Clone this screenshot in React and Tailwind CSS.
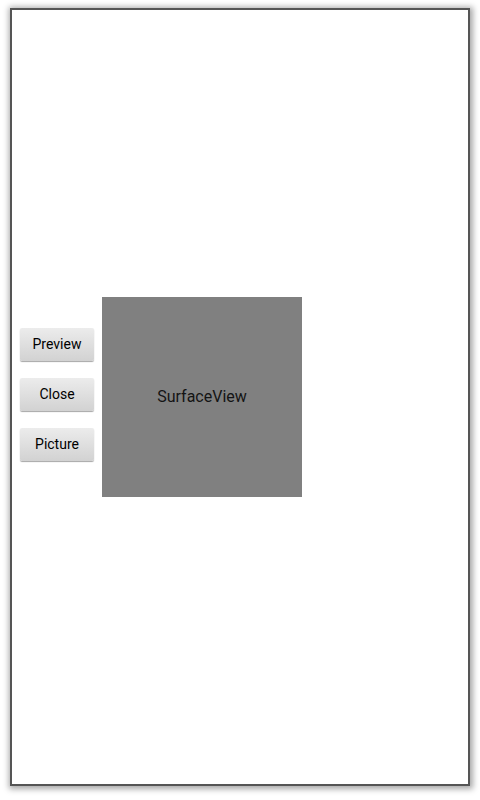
const buttons = ["Preview", "Close", "Picture"];

export default function App() {
  return (
    <div className="w-[480px] h-[800px] bg-white pt-[8px] pl-[10px] font-['Roboto',sans-serif]">
      <div className="w-[460px] h-[778px] border-2 border-[#555555] bg-white shadow-[1px_1px_6px_2px_rgba(0,0,0,0.35)] flex items-center pl-[8px]">
        <div className="flex flex-col gap-[17px] w-[74px] mr-[8px] -mt-[6px]">
          {buttons.map((label) => (
            <button
              key={label}
              className="h-[33px] w-[74px] rounded-[2px] bg-gradient-to-b from-[#ececec] to-[#d2d2d2] shadow-[0_1px_1px_rgba(0,0,0,0.35)] text-[14px] text-black"
            >
              {label}
            </button>
          ))}
        </div>
        <div className="w-[200px] h-[200px] -mt-[1px] bg-[#808080] flex items-center justify-center">
          <span className="text-[16px] text-[#141414]">SurfaceView</span>
        </div>
      </div>
    </div>
  );
}
